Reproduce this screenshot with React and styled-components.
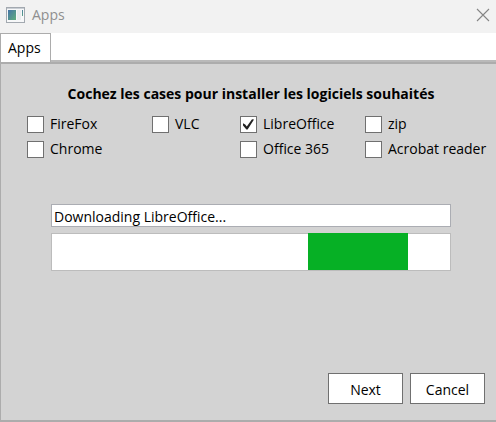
import React, { useState } from 'react';
import styled, { createGlobalStyle } from 'styled-components';

const GlobalStyle = createGlobalStyle`
  * {
    box-sizing: border-box;
  }

  body {
    margin: 0;
    color: #000;
    font-family: 'Open Sans', 'Noto Sans', sans-serif;
    font-size: 14px;
    line-height: 20px;
  }

  button,
  input {
    font: inherit;
    color: inherit;
  }
`;

const Window = styled.div`
  display: flex;
  flex-direction: column;
  min-height: 100vh;
  background: #fff;
`;

const TitleBar = styled.header`
  display: flex;
  align-items: center;
  gap: 7px;
  height: 33px;
  padding: 0 6px 4px;
  background: #f2f2f2;
  color: #8f8f8f;
`;

const WindowTitle = styled.span`
  flex: 1;
`;

const CloseButton = styled.button`
  display: flex;
  padding: 0;
  border: 0;
  background: none;
`;

const TabBar = styled.div`
  display: flex;
  height: 29px;
  background: linear-gradient(#b9b9b9, #b9b9b9) bottom / 100% 2px no-repeat #fff;
`;

const Tab = styled.button`
  padding: 0 9px 0 7px;
  border: 1px solid #acacac;
  border-width: 1px 1px 0 1px;
  background: #fff;
`;

const Panel = styled.main`
  flex: 1;
  display: flex;
  flex-direction: column;
  border: 2px solid #acacac;
  border-width: 2px 0 2px 1px;
  background: #d3d3d3;
`;

const Heading = styled.h1`
  margin: 20px 0 10px;
  padding-left: 5px;
  font-size: 14px;
  line-height: 20px;
  text-align: center;
`;

const AppGrid = styled.div`
  display: grid;
  grid-template-columns: 125fr 88fr 125fr 131fr;
  row-gap: 5px;
  padding-left: 26px;
`;

const Option = styled.label`
  grid-column: ${({ $column }) => $column};
  grid-row: ${({ $row }) => $row};
  display: flex;
  align-items: center;
  gap: 6px;
  white-space: nowrap;
`;

const CheckBox = styled.input`
  appearance: none;
  flex: none;
  width: 17px;
  height: 17px;
  margin: 0;
  border: 1px solid #707070;
  background: #fff;
`;

const BoxWrap = styled.span`
  position: relative;
  display: flex;

  svg {
    position: absolute;
    inset: 0;
    pointer-events: none;
  }
`;

const Status = styled.div`
  display: flex;
  flex-direction: column;
  gap: 6px;
  margin: 45px 45px 0 50px;
`;

const StatusText = styled.input`
  width: 100%;
  height: 23px;
  padding: 1px 2px 0;
  border: 1px solid #abadb3;
  background: #fff;
  outline: none;
`;

const ProgressTrack = styled.div`
  display: flex;
  height: 38px;
  padding-bottom: 1px;
  background: #fff;
  box-shadow: inset 0 0 0 1px #bcbcbc;
`;

const ProgressChunk = styled.div`
  width: 25%;
  margin-left: 64.25%;
  background: #06b025;
`;

const Footer = styled.footer`
  display: flex;
  justify-content: flex-end;
  gap: 7px;
  margin-top: auto;
  padding: 16px 11px;
`;

const Button = styled.button`
  width: 75px;
  height: 31px;
  padding: 2px 0 0;
  border: 1px solid #707070;
  background: #fff;
`;

const apps = [
  { name: 'FireFox', column: 1, row: 1 },
  { name: 'VLC', column: 2, row: 1 },
  { name: 'LibreOffice', column: 3, row: 1 },
  { name: 'zip', column: 4, row: 1 },
  { name: 'Chrome', column: 1, row: 2 },
  { name: 'Office 365', column: 3, row: 2 },
  { name: 'Acrobat reader', column: 4, row: 2 },
];

const AppIcon = () => (
  <svg width="19" height="16" viewBox="0 0 19 16" aria-hidden="true">
    <defs>
      <linearGradient id="pane" x1="0" y1="0" x2="1" y2="1">
        <stop offset="0" stopColor="#4574a8" />
        <stop offset="1" stopColor="#5fae7c" />
      </linearGradient>
    </defs>
    <rect x="0.5" y="0.5" width="18" height="15" fill="#f7f8f9" stroke="#a3a9b0" />
    <path d="M1 1.5h17" stroke="#c9ced4" />
    <rect x="2" y="3" width="8" height="10" fill="url(#pane)" />
    <rect x="11" y="3" width="4" height="10" fill="#e9ecee" />
    <rect x="16" y="3" width="1" height="6" fill="url(#pane)" />
  </svg>
);

const CloseIcon = () => (
  <svg width="14" height="14" viewBox="0 0 14 14" aria-hidden="true">
    <path d="M1 1l12 12M13 1L1 13" stroke="#858585" strokeWidth="1.1" />
  </svg>
);

const CheckMark = () => (
  <svg width="17" height="17" viewBox="0 0 17 17" aria-hidden="true">
    <path d="M3 7.2l2.2 1.2 1.6 2.2L12 3.2l2 .4L7.6 13.6H6.4L3 9.6z" fill="#212121" />
  </svg>
);

const App = () => {
  const [selected, setSelected] = useState(['LibreOffice']);

  const toggle = (name) => {
    setSelected((current) =>
      current.includes(name) ? current.filter((item) => item !== name) : [...current, name]
    );
  };

  return (
    <>
      <GlobalStyle />
      <Window>
        <TitleBar>
          <AppIcon />
          <WindowTitle>Apps</WindowTitle>
          <CloseButton type="button" aria-label="Close">
            <CloseIcon />
          </CloseButton>
        </TitleBar>
        <TabBar role="tablist">
          <Tab type="button" role="tab" aria-selected="true">Apps</Tab>
        </TabBar>
        <Panel>
          <Heading>Cochez les cases pour installer les logiciels souhaités</Heading>
          <AppGrid>
            {apps.map(({ name, column, row }) => (
              <Option key={name} $column={column} $row={row}>
                <BoxWrap>
                  <CheckBox
                    type="checkbox"
                    checked={selected.includes(name)}
                    onChange={() => toggle(name)}
                  />
                  {selected.includes(name) && <CheckMark />}
                </BoxWrap>
                {name}
              </Option>
            ))}
          </AppGrid>
          <Status>
            <StatusText readOnly aria-label="Status" value="Downloading LibreOffice..." />
            <ProgressTrack role="progressbar" aria-label="Installation">
              <ProgressChunk />
            </ProgressTrack>
          </Status>
          <Footer>
            <Button type="button">Next</Button>
            <Button type="button">Cancel</Button>
          </Footer>
        </Panel>
      </Window>
    </>
  );
};

export default App;
